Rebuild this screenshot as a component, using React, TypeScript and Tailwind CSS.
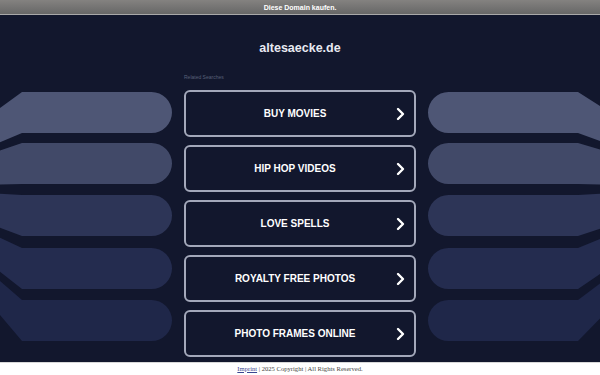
import React from 'react';

const searches = ['BUY MOVIES', 'HIP HOP VIDEOS', 'LOVE SPELLS', 'ROYALTY FREE PHOTOS', 'PHOTO FRAMES ONLINE'];

const bands = [
  { top: 92, fill: '#4e5675' },
  { top: 143, fill: '#414968' },
  { top: 195, fill: '#2d3557' },
  { top: 248, fill: '#242c4f' },
  { top: 300, fill: '#1f2749' },
];

// project a point at the pill edge toward the vanishing point to the side
function fan(y: number, dx: number, span: number) {
  return 187 + (y - 187) * (1 - dx / span);
}

function leftBand(top: number) {
  const b = top + 41;
  const r = 20.5;
  const ex = -30;
  const d = 22 - ex;
  return `M ${ex} ${fan(top, d, 130)} L 22 ${top} H ${172 - r} A ${r} ${r} 0 0 1 ${172 - r} ${b} H 22 L ${ex} ${fan(b, d, 130)} Z`;
}

function rightBand(top: number) {
  const b = top + 41;
  const r = 20.5;
  const ex = 630;
  const d = ex - 578;
  return `M ${ex} ${fan(top, d, 150)} L 578 ${top} H ${428 + r} A ${r} ${r} 0 0 0 ${428 + r} ${b} H 578 L ${ex} ${fan(b, d, 150)} Z`;
}

function Backdrop() {
  return (
    <svg className="absolute inset-0" width="600" height="375" viewBox="0 0 600 375">
      {bands.map((band) => (
        <g key={band.top} fill={band.fill}>
          <path d={leftBand(band.top)} />
          <path d={rightBand(band.top)} />
        </g>
      ))}
    </svg>
  );
}

export default function App() {
  return (
    <div className="w-[600px] h-[375px] flex flex-col overflow-hidden bg-[#12172d]" style={{ fontFamily: '"Liberation Sans", Arial, sans-serif' }}>
      <div className="h-[15px] shrink-0 flex items-center justify-center bg-gradient-to-b from-[#848280] to-[#676767] border-b border-[#a9a9a9]">
        <span className="text-[7px] font-bold text-white leading-none">Diese Domain kaufen.</span>
      </div>

      <div className="relative flex-1 flex flex-col items-center">
        <div className="absolute inset-x-0 top-[-15px]">
          <Backdrop />
        </div>

        <h1 className="relative mt-[25px] text-[12.5px] leading-[16px] font-bold text-[#e8eaf2]">altesaecke.de</h1>

        <div className="relative w-[232px] mt-[18px] mb-[10px] text-[5px] leading-[6px] text-[#586078]">Related Searches</div>

        <div className="relative flex flex-col gap-[8px]">
          {searches.map((label) => (
            <div
              key={label}
              className="relative w-[232px] h-[47px] rounded-[6px] border-2 border-[#a3a8ba] bg-[#12172d] flex items-center justify-center pr-[10px]"
            >
              <span className="text-[10px] font-bold text-white">{label}</span>
              <svg className="absolute right-[9px] top-1/2 -translate-y-1/2" width="9" height="13" viewBox="0 0 9 13">
                <polyline points="2,1.5 7,6.5 2,11.5" fill="none" stroke="#ffffff" strokeWidth="2.4" strokeLinecap="round" strokeLinejoin="round" />
              </svg>
            </div>
          ))}
        </div>
      </div>

      <div className="h-[13px] shrink-0 bg-white flex items-center justify-center border-t border-[#d8d8d8]">
        <span className="text-[6.6px] leading-none text-[#444]" style={{ fontFamily: '"Liberation Serif", "Times New Roman", serif' }}>
          <span className="underline text-[#3a4690]">Imprint</span> | 2025 Copyright | All Rights Reserved.
        </span>
      </div>
    </div>
  );
}
